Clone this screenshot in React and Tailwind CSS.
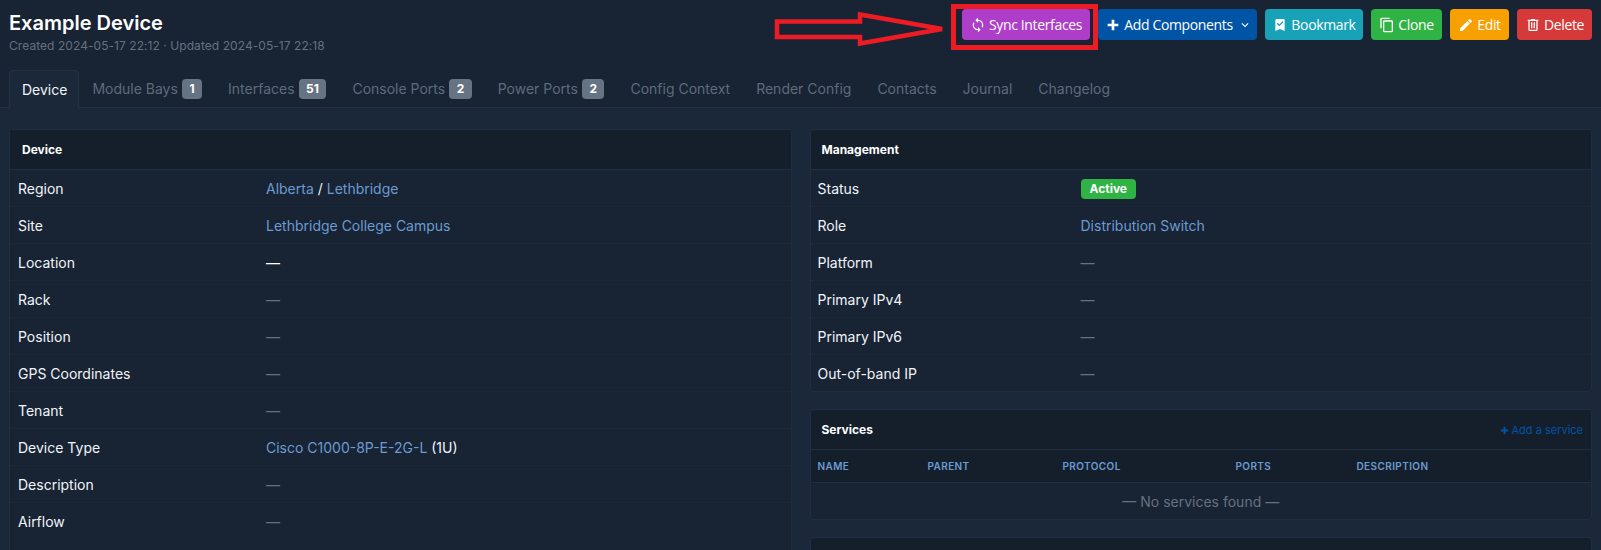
import React from 'react';

const icons = {
  sync: 'M12,18A6,6 0 0,1 6,12C6,11 6.25,10.03 6.7,9.2L5.24,7.74C4.46,8.97 4,10.43 4,12A8,8 0 0,0 12,20V23L16,19L12,15M12,4V1L8,5L12,9V6A6,6 0 0,1 18,12C18,13 17.75,13.97 17.3,14.8L18.76,16.26C19.54,15.03 20,13.57 20,12A8,8 0 0,0 12,4Z',
  plus: 'M20 14H14V20H10V14H4V10H10V4H14V10H20V14Z',
  bookmark: 'M17,3A2,2 0 0,1 19,5V21L12,18L5,21V5C5,3.89 5.9,3 7,3H17M11,14L17.25,7.76L15.84,6.34L11,11.18L8.41,8.59L7,10L11,14Z',
  copy: 'M19,21H8V7H19M19,5H8A2,2 0 0,0 6,7V21A2,2 0 0,0 8,23H19A2,2 0 0,0 21,21V7A2,2 0 0,0 19,5M16,1H4A2,2 0 0,0 2,3V17H4V3H16V1Z',
  pencil: 'M20.71,7.04C21.1,6.65 21.1,6 20.71,5.63L18.37,3.29C18,2.9 17.35,2.9 16.96,3.29L15.12,5.12L18.87,8.87M3,17.25V21H6.75L17.81,9.93L14.06,6.18L3,17.25Z',
  trash: 'M9,3V4H4V6H5V19A2,2 0 0,0 7,21H17A2,2 0 0,0 19,19V6H20V4H15V3H9M7,6H17V19H7V6M9,8V17H11V8H9M13,8V17H15V8H13Z',
  chevron: 'M7.41,8.58L12,13.17L16.59,8.58L18,10L12,16L6,10L7.41,8.58Z',
};

function Icon({ name, className = 'w-[16px] h-[16px]' }) {
  return (
    <svg viewBox="0 0 24 24" fill="currentColor" className={className}>
      <path d={icons[name]} />
    </svg>
  );
}

function Btn({ icon, color, width, children }) {
  return (
    <button className={`flex items-center justify-center gap-[3px] h-[31px] rounded-[4px] text-white text-[14px] font-['Open_Sans',sans-serif] tracking-[-0.35px] ${color} ${width}`}>
      <Icon name={icon} />
      {children}
    </button>
  );
}

function Tab({ label, count, active }) {
  if (active) {
    return (
      <div className="h-[38px] mb-[-1px] pl-[12px] pr-[11px] flex items-center border border-b-0 border-[#223044] bg-[#1b283a] rounded-t-[4px] text-[#f1f5f9]">
        {label}
      </div>
    );
  }
  return (
    <div className="h-[37px] px-[13px] flex items-center gap-[4px] text-[#5d6b7d]">
      {label}
      {count && (
        <span className="h-[20px] px-[7.5px] flex items-center rounded-[4px] bg-[#667382] text-white text-[12px] font-bold">{count}</span>
      )}
    </div>
  );
}

const Dash = () => <span className="text-[#66717f]">—</span>;

function Row({ label, value, pad, labelW }) {
  return (
    <div className={`h-[37px] last:h-[36px] flex items-center border-b border-dotted border-[#1f2c3f] last:border-b-0 ${pad}`}>
      <div className={`shrink-0 text-[#f1f5f9] ${labelW}`}>{label}</div>
      <div className="text-[#f1f5f9]">{value}</div>
    </div>
  );
}

const A = ({ children }) => <span className="text-[#6b9bd1]">{children}</span>;

function Card({ title, right, pad = 'px-[11px]', children }) {
  return (
    <div className="border border-[#202e41] rounded-[4px] bg-[#182334] overflow-hidden">
      <div className={`h-[40px] pt-[1px] flex items-center justify-between bg-[#151f2c] border-b border-[#202e41] ${pad}`}>
        <span className="text-[12px] font-bold text-white">{title}</span>
        {right}
      </div>
      {children}
    </div>
  );
}

const deviceRows = [
  ['Region', <><A>Alberta</A> / <A>Lethbridge</A></>],
  ['Site', <A>Lethbridge College Campus</A>],
  ['Location', <span className="text-white">—</span>],
  ['Rack', <Dash />],
  ['Position', <Dash />],
  ['GPS Coordinates', <Dash />],
  ['Tenant', <Dash />],
  ['Device Type', <><A>Cisco C1000-8P-E-2G-L</A> (1U)</>],
  ['Description', <Dash />],
  ['Airflow', <Dash />],
];

const mgmtRows = [
  ['Status', <span className="inline-flex items-center h-[20px] px-[9px] rounded-[4px] bg-[#2fb344] text-white text-[12px] font-bold">Active</span>],
  ['Role', <A>Distribution Switch</A>],
  ['Platform', <Dash />],
  ['Primary IPv4', <Dash />],
  ['Primary IPv6', <Dash />],
  ['Out-of-band IP', <Dash />],
];

export default function App() {
  return (
    <div className="relative h-[550px] overflow-hidden bg-[#1b283a] font-['Inter',sans-serif] text-[14px]">
      <div className="bg-[#182334] border-b border-[#223044]">
        <div className="flex justify-between px-[9px] pt-[9px] h-[70px]">
          <div>
            <h1 className="text-[20px] leading-[28px] font-semibold text-white">Example Device</h1>
            <div className="text-[12px] leading-[16px] tracking-[0.06px] text-[#66717f] mt-[1px]">Created 2024-05-17 22:12 · Updated 2024-05-17 22:18</div>
          </div>
          <div className="flex gap-[8px]">
            <Btn icon="sync" color="bg-[#ae3ec9]" width="w-[128px]">Sync Interfaces</Btn>
            <Btn icon="plus" color="bg-[#0054a6]" width="w-[159px] pl-[2px]">
              Add Components
              <Icon name="chevron" className="w-[14px] h-[14px] ml-[2px]" />
            </Btn>
            <Btn icon="bookmark" color="bg-[#17a2b8]" width="w-[98px]">Bookmark</Btn>
            <Btn icon="copy" color="bg-[#2fb344]" width="w-[71px]">Clone</Btn>
            <Btn icon="pencil" color="bg-[#f7a000]" width="w-[59px]">Edit</Btn>
            <Btn icon="trash" color="bg-[#d63939]" width="w-[75px]">Delete</Btn>
          </div>
        </div>
        <div className="flex items-end pl-[9px]">
          <Tab label="Device" active />
          <Tab label="Module Bays" count="1" />
          <Tab label="Interfaces" count="51" />
          <Tab label="Console Ports" count="2" />
          <Tab label="Power Ports" count="2" />
          <Tab label="Config Context" />
          <Tab label="Render Config" />
          <Tab label="Contacts" />
          <Tab label="Journal" />
          <Tab label="Changelog" />
        </div>
      </div>

      <div className="grid grid-cols-2 gap-[18px] px-[9px] pt-[21px]">
        <Card title="Device" pad="px-[12px]">
          {deviceRows.map(([label, value]) => (
            <Row key={label} label={label} value={value} pad="pl-[8px]" labelW="w-[248px]" />
          ))}
        </Card>
        <div className="flex flex-col gap-[17px]">
          <Card title="Management">
            {mgmtRows.map(([label, value]) => (
              <Row key={label} label={label} value={value} pad="pl-[7px]" labelW="w-[263px]" />
            ))}
          </Card>
          <Card
            title="Services"
            right={
              <span className="flex items-center gap-[2px] mr-[-3px] text-[11px] text-[#0054a6]">
                <Icon name="plus" className="w-[11px] h-[11px]" />
                Add a service
              </span>
            }
          >
            <div className="h-[33px] flex items-center bg-[#151f2c] border-b border-[#202e41] text-[10px] font-semibold tracking-[0.4px] text-[#6b9bd1]">
              <span className="w-[110px] pl-[7px]">NAME</span>
              <span className="w-[135px] pl-[7px]">PARENT</span>
              <span className="w-[173px] pl-[7px]">PROTOCOL</span>
              <span className="w-[121px] pl-[7px]">PORTS</span>
              <span className="pl-[7px]">DESCRIPTION</span>
            </div>
            <div className="h-[36px] flex items-center justify-center text-[#66717f]">— No services found —</div>
          </Card>
          <Card title="" />
        </div>
      </div>

      {/* annotation drawn on top of the screenshot */}
      <svg className="absolute left-0 top-0 pointer-events-none" width="1601" height="60" fill="none" stroke="#ed1c24">
        <polygon points="777,21.5 860,21.5 860,14.5 942,29 860,43.5 860,37 777,37" strokeWidth="4.5" />
        <rect x="953.5" y="6.5" width="142" height="41" strokeWidth="5" />
      </svg>
    </div>
  );
}
